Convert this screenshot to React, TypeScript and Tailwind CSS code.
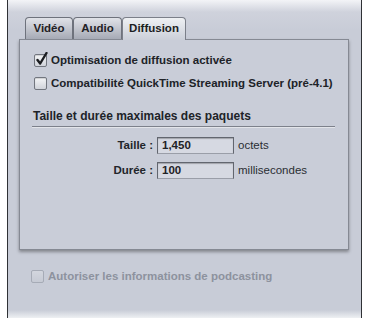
import React from 'react'

const font = { fontFamily: '"Liberation Sans", Arial, sans-serif' }

function Check({ checked = false, disabled = false }: { checked?: boolean; disabled?: boolean }) {
  return (
    <span
      className={
        'w-[13px] h-[13px] shrink-0 rounded-[2px] border flex items-center justify-center relative ' +
        (disabled
          ? 'border-[#a6abb6] bg-[linear-gradient(#d3d6de,#c6cad4)]'
          : 'border-[#72767f] bg-[linear-gradient(#f4f5f7,#d0d3da)] shadow-[inset_0_1px_1px_rgba(0,0,0,0.15)]')
      }
    >
      {checked && (
        <svg width="13" height="14" viewBox="0 0 13 14" className="absolute left-[0px] top-[-3px]">
          <path d="M2.5 8 L5.2 11.5 L11.5 1" fill="none" stroke="#1b1d21" strokeWidth="2.4" strokeLinecap="round" strokeLinejoin="round" />
        </svg>
      )}
    </span>
  )
}

function Tab({ label, width, active = false }: { label: string; width: string; active?: boolean }) {
  return (
    <div
      className={
        width +
        ' flex items-center justify-center rounded-t-[4px] border border-b-0 text-[11.5px] font-bold ' +
        (active
          ? 'border-[#7b7f89] bg-[linear-gradient(#eef0f3,#cbcfd9)] text-[#1c1e22] relative z-10 -mb-px h-[23px]'
          : 'h-[22px] border-[#6e727c] bg-[linear-gradient(#e0e2e8,#a6aab5)] text-[#1f2125]')
      }
    >
      {label}
    </div>
  )
}

function Field({ label, value, unit }: { label: string; value: string; unit: string }) {
  return (
    <div className="flex items-center h-[17px]">
      <span className="w-[123px] text-right pr-[4px] font-bold text-[#22252a]">{label}</span>
      <div className="w-[77px] h-[17px] border border-[#62666f] border-b-[#9a9ea8] bg-[#d6d9e2] shadow-[inset_0_1px_1px_rgba(0,0,0,0.25)] flex items-center pl-[4px] font-bold text-[#1f2226]">
        {value}
      </div>
      <span className="pl-[4px] text-[#2a2d33]">{unit}</span>
    </div>
  )
}

export default function App() {
  return (
    <div className="w-[365px] h-[326px] bg-white overflow-hidden text-[11.5px]" style={font}>
      <div className="ml-[7px] w-[355px] h-[318px] border-x border-[#2f3135] bg-[linear-gradient(#f3f4f7_0px,#cfd2dc_12px,#c8ccd7_30px,#c8ccd7_100%)] relative">
        <div className="flex items-end pl-[17px] pt-[17px]">
          <Tab label="Vidéo" width="w-[48px]" />
          <Tab label="Audio" width="w-[49px]" />
          <Tab label="Diffusion" width="w-[64px]" active />
        </div>
        <div className="ml-[11px] w-[330px] h-[211px] border border-[#858993] bg-[#c9cdd8] shadow-[0_2px_3px_rgba(0,0,0,0.35)] pt-[14px] pl-[14px]">
          <div className="flex items-center gap-[4px] h-[13px]">
            <Check checked />
            <span className="font-bold text-[#202328]">Optimisation de diffusion activée</span>
          </div>
          <div className="flex items-center gap-[4px] h-[13px] mt-[10px]">
            <Check />
            <span className="font-bold text-[#202328]">Compatibilité QuickTime Streaming Server (pré-4.1)</span>
          </div>
          <div className="mt-[19px] ml-[-2px] w-[303px]">
            <div className="font-bold text-[#202328] text-[12px] leading-[14px] pl-[1px]">Taille et durée maximales des paquets</div>
            <div className="mt-[3px] h-[2px] border-t border-[#7d818b] border-b border-b-[#e3e5ea]" />
          </div>
          <div className="mt-[9px] flex flex-col gap-[8px]">
            <Field label="Taille :" value="1,450" unit="octets" />
            <Field label="Durée :" value="100" unit="millisecondes" />
          </div>
        </div>
        <div className="flex items-center gap-[4px] mt-[20px] ml-[23px] h-[13px]">
          <Check disabled />
          <span className="font-bold text-[#8d929e]">Autoriser les informations de podcasting</span>
        </div>
        <div className="absolute left-0 right-0 bottom-0 h-[8px] bg-[linear-gradient(#c8ccd7,#eef0f3)]" />
      </div>
    </div>
  )
}
